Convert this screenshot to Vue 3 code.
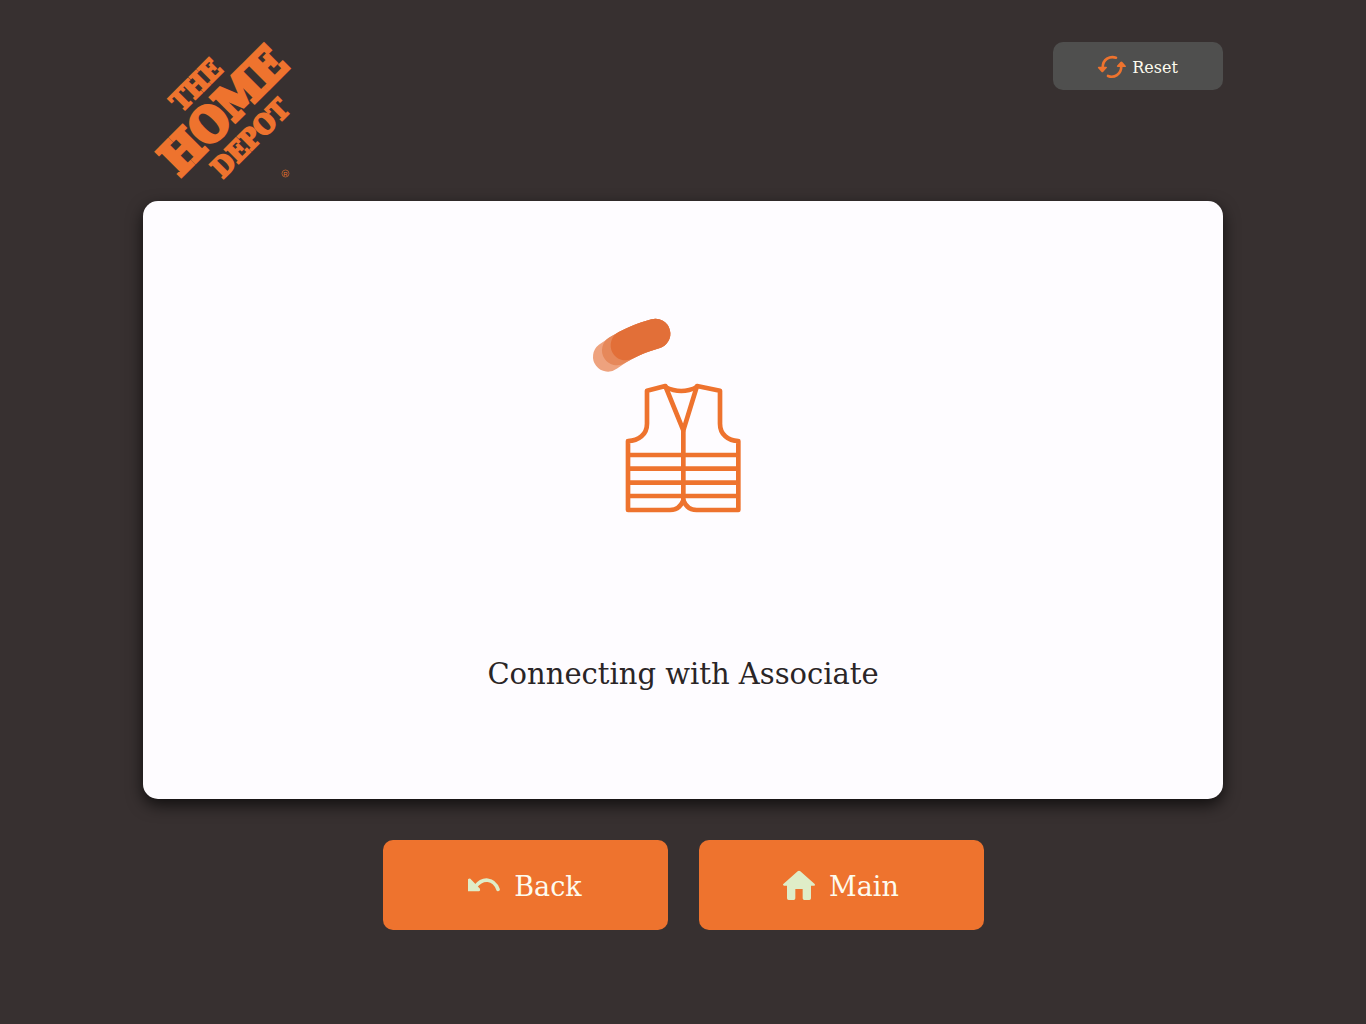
<template>
  <div class="kiosk">
    <header class="header">
      <svg class="logo" viewBox="9 7 138 138" role="img" aria-label="The Home Depot">
        <g class="logo-words" transform="rotate(-45)">
          <text class="word-small" x="-29" y="81">THE</text>
          <text class="word-large" x="-76" y="125">HOME</text>
          <text class="word-small" x="-47" y="157">DEPOT</text>
        </g>
        <circle class="mark-ring" cx="140.500" cy="138.500" r="3.500" />
        <text class="mark" x="140.500" y="140.500">R</text>
      </svg>
      <button class="reset-button" type="button" @click="handleReset">
        <svg class="reset-icon" viewBox="0 0 84 68" aria-hidden="true">
          <path class="reset-arc" d="M54 6C36 0 14 10 14 36" />
          <path class="reset-arc" d="M30 61C48 68 70 57 70 31" />
          <path d="M2 33H25Q29 34 26 37L16 48Q13 51 10 48L0 37Q-2 34 2 33z" />
          <path d="M59 34H82Q86 33 83 30L73 19Q70 16 67 19L57 30Q55 33 59 34z" />
        </svg>
        <span>Reset</span>
      </button>
    </header>

    <main class="card">
      <svg class="vest" viewBox="9 0 600 660" aria-hidden="true">
        <g class="trail">
          <path class="trail-far" d="M84 155Q148 106 226 86" />
          <path class="trail-mid" d="M111 136Q164 103 226 86" />
          <path class="trail-near" d="M137 121Q180 98 226 86" />
        </g>
        <g class="vest-lines">
          <path d="M256 243L201 257V356C201 388 176 408 144 408V615H270Q298 615 310 586Q322 615 350 615H475V408C444 408 420 388 420 356V257L351 243L310 376Z" />
          <path d="M256 246Q304 270 351 246" />
          <path d="M310 376V586" />
          <path v-for="y in stripes" :key="y" :d="`M144 ${y}H475`" />
        </g>
      </svg>
      <h1 class="status" role="status">{{ status }}</h1>
    </main>

    <nav class="actions">
      <button class="action-button" type="button" @click="handleBack">
        <svg class="action-icon" viewBox="0 0 96 96" aria-hidden="true">
          <path class="back-arc" d="M22 50C44 22 77 24 90 58" />
          <path d="M0 28Q5 23 10 29L36 56Q38 63 33 64H0z" />
        </svg>
        <span>Back</span>
      </button>
      <button class="action-button" type="button" @click="handleMain">
        <svg class="action-icon" viewBox="0 0 96 96" aria-hidden="true">
          <path d="M44 4Q48 0 52 4L95 42Q98 47 93 47H84V85Q84 90 79 90H64Q59 90 59 85V57H37V85Q37 90 32 90H17Q12 90 12 85V47H3Q-2 46 1 42z" />
        </svg>
        <span>Main</span>
      </button>
    </nav>
  </div>
</template>

<script setup>
import { ref } from 'vue'

const emit = defineEmits(['reset', 'back', 'main'])

const status = ref('Connecting with Associate')
const stripes = [450, 491, 533, 573]

function handleReset() {
  emit('reset')
}

function handleBack() {
  emit('back')
}

function handleMain() {
  emit('main')
}
</script>

<style>
body {
  margin: 0;
  background: #373030;
}
</style>

<style scoped>
.kiosk {
  box-sizing: border-box;
  width: 100%;
  max-width: 1112px;
  min-height: 100vh;
  margin: 0 auto;
  padding: 42px 16px;
  font-family: "DejaVu Serif", serif;
}

.header {
  display: flex;
  align-items: flex-start;
  justify-content: space-between;
  padding-left: 11px;
  margin-bottom: 21px;
}

.logo {
  display: block;
  width: 138px;
  height: 138px;
  overflow: visible;
}

.logo-words {
  fill: #ee732e;
  stroke: #ee732e;
  stroke-miterlimit: 2;
  font-family: "DejaVu Serif Condensed", "DejaVu Serif", serif;
  font-weight: 700;
}

.word-small {
  font-size: 27px;
  stroke-width: 2px;
}

.word-large {
  font-size: 47px;
  stroke-width: 4px;
}

.mark {
  fill: #ee732e;
  font-family: "Liberation Sans", sans-serif;
  font-size: 6px;
  text-anchor: middle;
}

.mark-ring {
  fill: none;
  stroke: #ee732e;
  stroke-width: 0.6;
}

button {
  display: flex;
  align-items: center;
  justify-content: center;
  padding: 2px 0 0;
  border: none;
  border-radius: 10px;
  color: #fdfbee;
  font-family: inherit;
  cursor: pointer;
}

.reset-button {
  gap: 6px;
  width: 170px;
  height: 48px;
  background: #4f4f4e;
  font-size: 16px;
}

.reset-icon {
  width: 28px;
  height: 24px;
  overflow: visible;
  fill: #ee732e;
}

.reset-arc {
  fill: none;
  stroke: #ee732e;
  stroke-width: 8;
  stroke-linecap: round;
}

.card {
  display: flex;
  flex-direction: column;
  align-items: center;
  box-sizing: border-box;
  min-height: 598px;
  padding: 104px 24px;
  border-radius: 15px;
  background: #fefcff;
  box-shadow: 0 6px 16px rgba(0, 0, 0, 0.7);
}

.vest {
  width: 200px;
  height: 220px;
}

.trail {
  fill: none;
  stroke-width: 90;
  stroke-linecap: round;
}

.trail-far {
  stroke: #eea27e;
}

.trail-mid {
  stroke: #e6885a;
}

.trail-near {
  stroke: #e26f38;
}

.vest-lines {
  fill: none;
  stroke: #ee732e;
  stroke-width: 14;
  stroke-linejoin: round;
}

.status {
  margin: 129px 0 0;
  color: #2a2526;
  font-size: 29px;
  font-weight: 400;
  line-height: 40px;
  text-align: center;
}

.actions {
  display: flex;
  flex-wrap: wrap;
  justify-content: center;
  gap: 31px;
  margin-top: 41px;
}

.action-button {
  gap: 14px;
  width: 285px;
  height: 90px;
  background: #ee732e;
  font-size: 27px;
}

.action-icon {
  width: 32px;
  height: 32px;
  fill: #dfedc8;
}

.back-arc {
  fill: none;
  stroke: #dfedc8;
  stroke-width: 11;
  stroke-linecap: round;
}
</style>
